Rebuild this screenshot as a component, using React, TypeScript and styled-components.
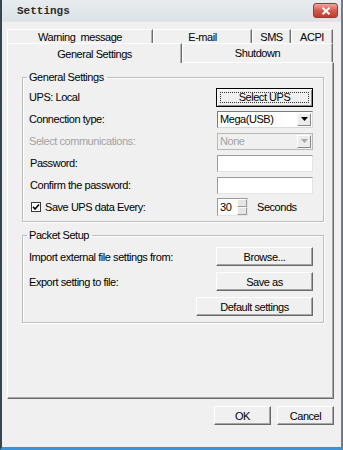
import React from 'react';
import styled, { createGlobalStyle } from 'styled-components';

const GlobalStyle = createGlobalStyle`
  html, body { margin: 0; padding: 0; background: #ffffff; }
  body {
    font-family: "Liberation Sans", Arial, sans-serif;
    font-size: 11px;
    color: #000;
  }
  * { box-sizing: border-box; }
`;

const Window = styled.div`
  width: 343px;
  height: 450px;
  display: flex;
  flex-direction: column;
  background: #f0f0f0;
  border-left: 2px solid #33474f;
  border-right: 2px solid #6f7d85;
  border-bottom: 3px solid #3d93d8;
`;

const TitleBar = styled.div`
  height: 22px;
  flex: none;
  display: flex;
  align-items: center;
  justify-content: space-between;
  padding: 0 3px 0 15px;
  background: linear-gradient(#e8ecef, #dce2e6);
  border-bottom: 1px solid #e2e7ea;
`;

const Title = styled.span`
  font-family: "Liberation Mono", "Courier New", monospace;
  font-weight: bold;
  font-size: 11px;
  color: #2b2b2b;
`;

const CloseButton = styled.div`
  width: 25px;
  height: 15px;
  border-radius: 3px;
  background: linear-gradient(#eaa79d, #d65a4c 50%, #c33a2c);
  border: 1px solid #9b3a30;
  display: flex;
  align-items: center;
  justify-content: center;
`;

const Body = styled.div`
  flex: 1;
  display: flex;
  flex-direction: column;
  padding: 5px 7px 22px 5px;
  letter-spacing: -0.45px;
`;

const TabRow = styled.div<{ $h: number; $pt: number }>`
  display: flex;
  height: ${(p) => p.$h}px;
  padding-top: ${(p) => p.$pt}px;
`;

const Tab = styled.div<{ $w: number; $active?: boolean }>`
  width: ${(p) => p.$w}px;
  flex: none;
  display: flex;
  justify-content: center;
  align-items: center;
  border-top: 1px solid #ffffff;
  border-left: 1px solid #ffffff;
  border-right: 1px solid #6d6d6d;
  box-shadow: inset -1px 0 0 #b4b4b4;
  background: #f0f0f0;
  position: relative;
  z-index: ${(p) => (p.$active ? 2 : 1)};
  margin-bottom: ${(p) => (p.$active ? -1 : 0)}px;
`;

const Panel = styled.div`
  flex: 1;
  display: flex;
  flex-direction: column;
  gap: 7px;
  padding: 8px 9px 0 14px;
  border-top: 1px solid #ffffff;
  border-left: 1px solid #ffffff;
  border-right: 1px solid #6b6b6b;
  border-bottom: 1px solid #6b6b6b;
  box-shadow: inset -1px -1px 0 #a8a8a8;
`;

const Group = styled.fieldset`
  margin: 0;
  min-width: 0;
  padding: 2px 10px 3px 6px;
  border: 1px solid #bdbdbd;
  box-shadow: inset 1px 1px 0 #ffffff, 1px 1px 0 #ffffff;
`;

const Legend = styled.legend`
  padding: 0 3px 0 2px;
  margin-left: -2px;
  line-height: 13px;
`;

const Row = styled.div<{ $h: number; $end?: boolean }>`
  height: ${(p) => p.$h}px;
  display: flex;
  align-items: center;
  justify-content: ${(p) => (p.$end ? 'flex-end' : 'space-between')};
`;

const Label = styled.span<{ $disabled?: boolean; $indent?: number }>`
  color: ${(p) => (p.$disabled ? '#a3a3a3' : '#000')};
  padding-left: ${(p) => p.$indent ?? 0}px;
`;

const Button = styled.button<{ $w: number; $focus?: boolean }>`
  width: ${(p) => p.$w}px;
  height: 19px;
  margin: 0;
  padding: 0;
  font: inherit;
  letter-spacing: inherit;
  color: #000;
  display: flex;
  align-items: center;
  justify-content: center;
  background: #f0f0f0;
  border-style: solid;
  border-width: 1px;
  border-color: ${(p) => (p.$focus ? '#000' : '#ffffff #6a6a6a #6a6a6a #ffffff')};
  box-shadow: ${(p) =>
    p.$focus
      ? 'inset 1px 1px 0 #fff, inset -1px -1px 0 #8a8a8a'
      : 'inset -1px -1px 0 #a5a5a5'};
  position: relative;
`;

const FocusRing = styled.span`
  position: absolute;
  inset: 3px;
  border: 1px dotted #333;
  pointer-events: none;
`;

const Combo = styled.div<{ $disabled?: boolean }>`
  width: 96px;
  height: 17px;
  display: flex;
  align-items: center;
  justify-content: space-between;
  padding: 0 1px 0 2px;
  border: 1px solid;
  border-color: ${(p) => (p.$disabled ? '#b9b9b9' : '#7a7a7a #d9d9d9 #d9d9d9 #7a7a7a')};
  background: ${(p) => (p.$disabled ? '#f0f0f0' : '#ffffff')};
  color: ${(p) => (p.$disabled ? '#a3a3a3' : '#000')};
`;

const ComboArrow = styled.div<{ $disabled?: boolean }>`
  width: 14px;
  height: 13px;
  display: flex;
  align-items: center;
  justify-content: center;
  background: #ececec;
  border-style: solid;
  border-width: 1px;
  border-color: #ffffff #8a8a8a #8a8a8a #ffffff;
  color: ${(p) => (p.$disabled ? '#a8a8a8' : '#000')};
`;

const TextInput = styled.div`
  width: 96px;
  height: 17px;
  background: #ffffff;
  border: 1px solid;
  border-color: #9a9a9a #e4e4e4 #e4e4e4 #9a9a9a;
`;

const CheckRow = styled.div`
  display: flex;
  align-items: center;
  gap: 4px;
  padding-left: 2px;
`;

const CheckBox = styled.div`
  width: 10px;
  height: 10px;
  background: #ffffff;
  border: 1px solid #3a3a3a;
  display: flex;
  align-items: center;
  justify-content: center;
`;

const SpinGroup = styled.div`
  width: 96px;
  display: flex;
  align-items: center;
  gap: 9px;
`;

const Spinner = styled.div`
  width: 31px;
  height: 18px;
  display: flex;
  background: #ffffff;
  border: 1px solid;
  border-color: #9a9a9a #e4e4e4 #e4e4e4 #9a9a9a;
`;

const SpinValue = styled.span`
  flex: 1;
  padding-left: 2px;
  line-height: 16px;
`;

const SpinButtons = styled.div`
  width: 10px;
  display: flex;
  flex-direction: column;
`;

const SpinHalf = styled.div`
  flex: 1;
  background: #e6e6e6;
  border-style: solid;
  border-width: 1px;
  border-color: #ffffff #9a9a9a #9a9a9a #ffffff;
`;

const Footer = styled.div`
  margin-top: 7px;
  display: flex;
  justify-content: flex-end;
  gap: 6px;
`;

const Arrow = ({ color }: { color: string }) => (
  <svg width="7" height="4" viewBox="0 0 7 4">
    <path d="M0 0h7L3.5 4z" fill={color} />
  </svg>
);

export default function App() {
  return (
    <>
      <GlobalStyle />
      <Window>
        <TitleBar>
          <Title>Settings</Title>
          <CloseButton>
            <svg width="10" height="8" viewBox="0 0 10 8">
              <path d="M1.5 0.8L8.5 7.2M8.5 0.8L1.5 7.2" stroke="#fff" strokeWidth="2" />
            </svg>
          </CloseButton>
        </TitleBar>
        <Body>
          <TabRow $h={16} $pt={2}>
            <Tab $w={146}>Warning&nbsp; message</Tab>
            <Tab $w={99}>E-mail</Tab>
            <Tab $w={39}>SMS</Tab>
            <Tab $w={42}>ACPI</Tab>
          </TabRow>
          <TabRow $h={19} $pt={0}>
            <Tab $w={175} $active>General Settings</Tab>
            <Tab $w={151}>Shutdown</Tab>
          </TabRow>
          <Panel>
            <Group>
              <Legend>General Settings</Legend>
              <Row $h={22}>
                <Label>UPS: Local</Label>
                <Button $w={97} $focus>
                  Select UPS
                  <FocusRing />
                </Button>
              </Row>
              <Row $h={22}>
                <Label>Connection type:</Label>
                <Combo>
                  <span>Mega(USB)</span>
                  <ComboArrow>
                    <Arrow color="#000" />
                  </ComboArrow>
                </Combo>
              </Row>
              <Row $h={22}>
                <Label $disabled>Select communications:</Label>
                <Combo $disabled>
                  <span>None</span>
                  <ComboArrow $disabled>
                    <Arrow color="#a8a8a8" />
                  </ComboArrow>
                </Combo>
              </Row>
              <Row $h={22}>
                <Label $indent={1}>Password:</Label>
                <TextInput />
              </Row>
              <Row $h={22}>
                <Label $indent={1}>Confirm the password:</Label>
                <TextInput />
              </Row>
              <Row $h={22}>
                <CheckRow>
                  <CheckBox>
                    <svg width="8" height="8" viewBox="0 0 8 8">
                      <path d="M1 3.8L3 6L7 1.5" stroke="#000" strokeWidth="1.6" fill="none" />
                    </svg>
                  </CheckBox>
                  <Label>Save UPS data Every:</Label>
                </CheckRow>
                <SpinGroup>
                  <Spinner>
                    <SpinValue>30</SpinValue>
                    <SpinButtons>
                      <SpinHalf />
                      <SpinHalf />
                    </SpinButtons>
                  </Spinner>
                  <Label>Seconds</Label>
                </SpinGroup>
              </Row>
            </Group>
            <Group>
              <Legend>Packet Setup</Legend>
              <Row $h={25}>
                <Label>Import external file settings from:</Label>
                <Button $w={97}>Browse...</Button>
              </Row>
              <Row $h={25}>
                <Label>Export setting to file:</Label>
                <Button $w={97}>Save as</Button>
              </Row>
              <Row $h={25} $end>
                <Button $w={117}>Default settings</Button>
              </Row>
            </Group>
          </Panel>
          <Footer>
            <Button $w={57}>OK</Button>
            <Button $w={57}>Cancel</Button>
          </Footer>
        </Body>
      </Window>
    </>
  );
}
